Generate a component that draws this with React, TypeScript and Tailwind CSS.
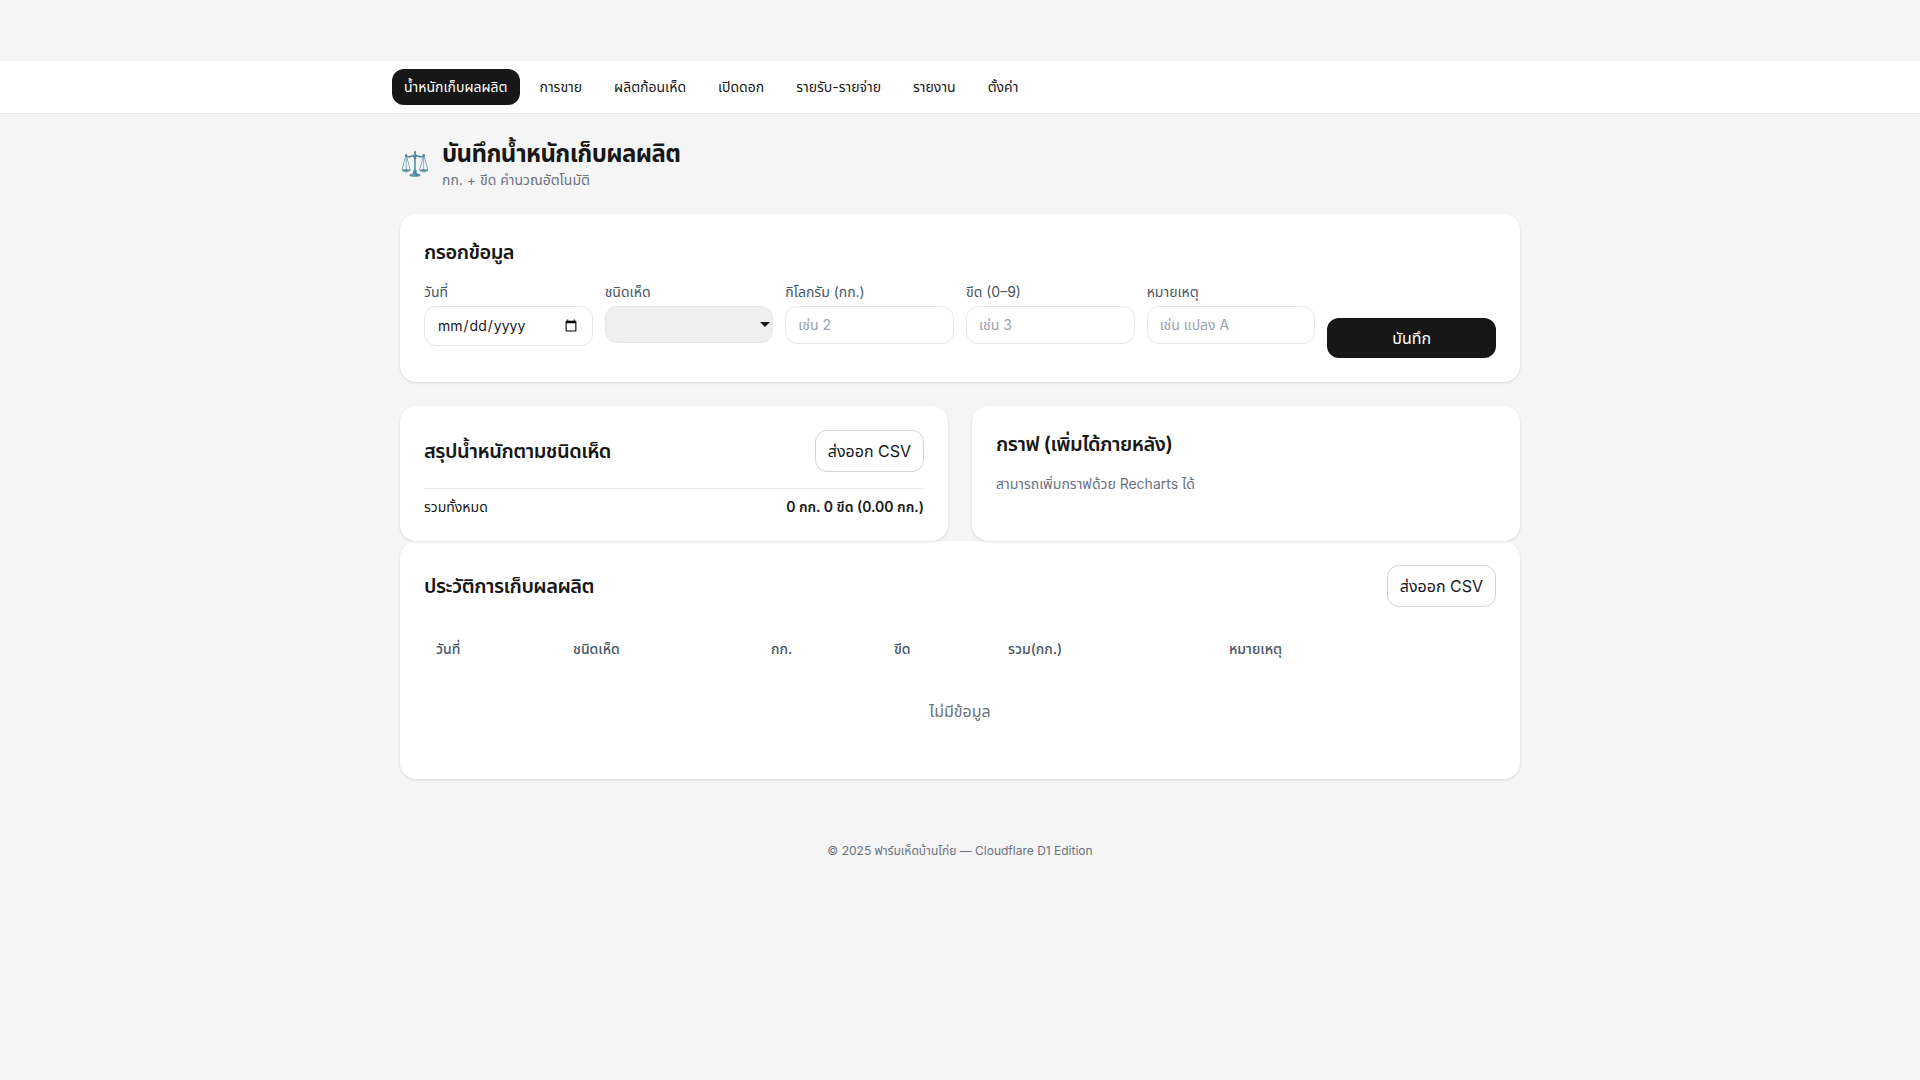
const font = "font-['Inter','Noto_Sans_Thai',sans-serif]";

const navItems = ["น้ำหนักเก็บผลผลิต", "การขาย", "ผลิตก้อนเห็ด", "เปิดดอก", "รายรับ-รายจ่าย", "รายงาน", "ตั้งค่า"];

function Field({ label, children }: { label: string; children: React.ReactNode }) {
  return (
    <div>
      <label className="block text-sm text-gray-600 mb-1">{label}</label>
      {children}
    </div>
  );
}

function ExportButton() {
  return (
    <button className="px-3 py-2 rounded-xl border border-gray-300 bg-white text-base text-[#171717]">ส่งออก CSV</button>
  );
}

const inputClass = "w-full block px-3 py-2 rounded-xl border border-gray-200 bg-white text-sm placeholder:text-gray-400";

export default function App() {
  return (
    <div className={`min-h-screen bg-[#f5f5f5] text-[#171717] ${font}`}>
      <div className="pt-[61px]">
        <nav className="bg-white border-b border-gray-200">
          <div className="max-w-6xl mx-auto px-2 py-2 flex gap-2">
            {navItems.map((item, i) => (
              <a key={item} className={i === 0 ? "px-3 py-2 rounded-xl text-sm bg-[#171717] text-white" : "px-3 py-2 rounded-xl text-sm text-[#171717]"}>
                {item}
              </a>
            ))}
          </div>
        </nav>
      </div>

      <main className="max-w-6xl mx-auto px-4 py-6">
        <div className="flex items-center gap-3 mb-6">
          <span className="text-2xl">⚖️</span>
          <div>
            <h1 className="text-2xl font-bold tracking-tight">บันทึกน้ำหนักเก็บผลผลิต</h1>
            <p className="text-sm text-gray-500">กก. + ขีด คำนวณอัตโนมัติ</p>
          </div>
        </div>

        <section className="bg-white rounded-2xl shadow-sm p-6 mb-6">
          <h2 className="text-xl font-semibold tracking-tight mb-4">กรอกข้อมูล</h2>
          <div className="grid grid-cols-6 gap-3 items-start">
            <Field label="วันที่">
              <input type="date" className={`${inputClass} h-[39.5px]`} />
            </Field>
            <Field label="ชนิดเห็ด">
              <div className="relative">
                <select className="w-full block appearance-none px-3 py-2 rounded-xl border border-gray-200 bg-[#efefef] text-sm h-[37px]" />
                <span className="absolute right-[3px] top-[16px] border-x-[5px] border-t-[5px] border-x-transparent border-t-[#171717]" />
              </div>
            </Field>
            <Field label="กิโลกรัม (กก.)">
              <input className={inputClass} placeholder="เช่น 2" />
            </Field>
            <Field label="ขีด (0–9)">
              <input className={inputClass} placeholder="เช่น 3" />
            </Field>
            <Field label="หมายเหตุ">
              <input className={inputClass} placeholder="เช่น แปลง A" />
            </Field>
            <button className="mt-9 w-full h-10 rounded-xl bg-[#171717] text-white text-base">บันทึก</button>
          </div>
        </section>

        <div className="grid grid-cols-2 gap-6">
          <section className="bg-white rounded-2xl shadow-sm p-6">
            <div className="flex items-center justify-between mb-4">
              <h2 className="text-xl font-semibold tracking-tight">สรุปน้ำหนักตามชนิดเห็ด</h2>
              <ExportButton />
            </div>
            <div className="border-t border-gray-200 pt-2 flex justify-between text-sm">
              <span>รวมทั้งหมด</span>
              <span className="font-semibold">0 กก. 0 ขีด (0.00 กก.)</span>
            </div>
          </section>
          <section className="bg-white rounded-2xl shadow-sm p-6">
            <h2 className="text-xl font-semibold tracking-tight mb-4">กราฟ (เพิ่มได้ภายหลัง)</h2>
            <p className="text-sm text-gray-500">สามารถเพิ่มกราฟด้วย Recharts ได้</p>
          </section>
        </div>

        <section className="bg-white rounded-2xl shadow-sm p-6">
          <div className="flex items-center justify-between mb-6">
            <h2 className="text-xl font-semibold tracking-tight">ประวัติการเก็บผลผลิต</h2>
            <ExportButton />
          </div>
          <table className="w-full table-fixed text-sm">
            <thead>
              <tr className="text-left text-gray-600">
                <th className="w-[137px] px-3 py-2 font-medium">วันที่</th>
                <th className="w-[198px] px-3 py-2 font-medium">ชนิดเห็ด</th>
                <th className="w-[123px] px-3 py-2 font-medium">กก.</th>
                <th className="w-[114px] px-3 py-2 font-medium">ขีด</th>
                <th className="w-[221px] px-3 py-2 font-medium">รวม(กก.)</th>
                <th className="px-3 py-2 font-medium">หมายเหตุ</th>
              </tr>
            </thead>
            <tbody>
              <tr>
                <td colSpan={6} className="py-8 text-center text-base text-gray-500">ไม่มีข้อมูล</td>
              </tr>
            </tbody>
          </table>
        </section>
      </main>

      <footer className="py-10 text-center text-xs text-gray-500">© 2025 ฟาร์มเห็ดบ้านโก่ย — Cloudflare D1 Edition</footer>
    </div>
  );
}
